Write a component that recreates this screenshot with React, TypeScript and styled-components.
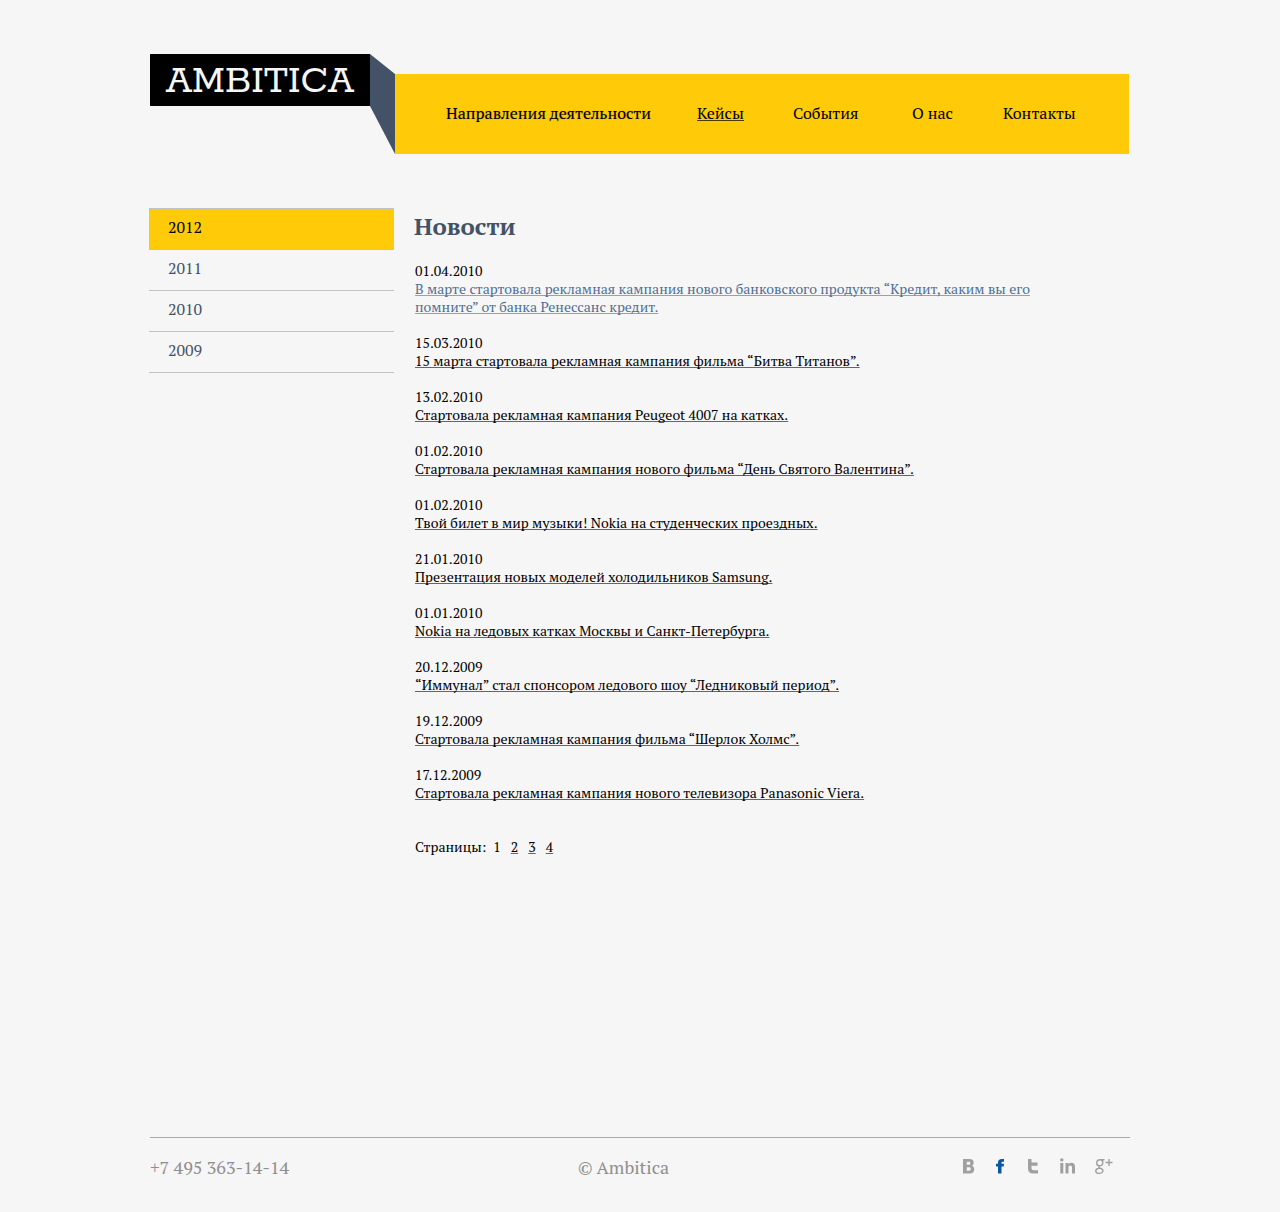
import React from "react";
import styled, { createGlobalStyle } from "styled-components";

const GlobalStyle = createGlobalStyle`
  *, *::before, *::after { box-sizing: border-box; }
  body {
    margin: 0;
    background: #f6f6f6;
    color: #000;
    font-family: "PT Serif", "Liberation Serif", serif;
    font-size: 14px;
    line-height: 18px;
  }
  #root { min-height: 100vh; display: flex; flex-direction: column; }
`;

const Page = styled.div`
  width: 100%;
  max-width: 980px;
  margin: 0 auto;
  flex: 1;
  display: flex;
  flex-direction: column;
  padding-top: 54px;
`;

const Header = styled.header`
  display: flex;
  align-items: flex-start;
  padding-right: 1px;
`;

const Logo = styled.a`
  flex: none;
  width: 220px;
  height: 52px;
  display: flex;
  align-items: center;
  justify-content: center;
  padding-top: 4px;
  background: #000;
  color: #f6f6f6;
  font-family: "Rokkitt", "DejaVu Serif", serif;
  font-size: 41px;
  line-height: 48px;
  text-decoration: none;
`;

const Fold = styled.svg`
  flex: none;
  display: block;
`;

const Nav = styled.nav`
  flex: 1;
  min-height: 80px;
  margin-top: 20px;
  padding: 0 0 2px 51px;
  display: grid;
  grid-template-columns: 251fr 96fr 119fr 91fr 126fr;
  align-items: center;
  background: #ffcb08;
`;

const NavLink = styled.a<{ $current?: boolean; $strong?: boolean }>`
  color: #000;
  font-size: 16px;
  line-height: 24px;
  white-space: nowrap;
  text-decoration: ${(p) => (p.$current ? "underline" : "none")};
  text-decoration-color: #4d3d02;
  text-shadow: ${(p) => (p.$strong ? "0 0 1px rgba(0, 0, 0, 0.3)" : "none")};
`;

const Columns = styled.div`
  display: grid;
  grid-template-columns: 245px minmax(0, 640px);
  column-gap: 20px;
  align-items: start;
  margin: 54px 0 0 -1px;
`;

const Years = styled.ul`
  list-style: none;
  margin: 0;
  padding: 0;
  border-top: 1px solid #bfc3c7;
`;

const YearLink = styled.a<{ $active?: boolean }>`
  display: block;
  padding: 6px 19px 10px;
  border-bottom: 1px solid #bfc3c7;
  background: ${(p) => (p.$active ? "#ffcb08" : "transparent")};
  color: ${(p) => (p.$active ? "#000" : "#435266")};
  font-size: 16px;
  line-height: 24px;
  text-decoration: none;
`;

const Title = styled.h1`
  margin: 0;
  color: #435266;
  font-size: 24px;
  line-height: 36px;
`;

const NewsList = styled.ul`
  list-style: none;
  margin: 18px 0 36px;
  padding: 0 0 0 1px;
  display: grid;
  gap: 18px;
`;

const NewsDate = styled.time`
  display: block;
`;

const NewsLink = styled.a<{ $accent?: boolean }>`
  color: ${(p) => (p.$accent ? "#4f6f98" : "#000")};
  text-decoration: underline;
  text-decoration-color: ${(p) => (p.$accent ? "#8ba2c0" : "#666")};
  text-decoration-skip-ink: none;
`;

const Pages = styled.nav`
  display: flex;
  gap: 10px;
  padding-left: 1px;
`;

const PagesLabel = styled.span`
  margin-right: -3px;
`;

const Footer = styled.footer`
  margin-top: auto;
  min-height: 75px;
  padding: 17px 17px 0 0;
  display: grid;
  grid-template-columns: 428px 1fr auto;
  align-items: start;
  border-top: 1px solid #a9a9a9;
  color: #8f8f8f;
  font-size: 18px;
  line-height: 24px;
`;

const Social = styled.div`
  display: flex;
  align-items: flex-start;
  gap: 21px;
  padding-top: 3px;
`;

const SocialLink = styled.a<{ $accent?: boolean }>`
  color: ${(p) => (p.$accent ? "#0a57a4" : "#a0a0a0")};

  svg {
    display: block;
    overflow: visible;
  }
`;

const news = [
  ["01.04.2010", "В марте стартовала рекламная кампания нового банковского продукта “Кредит, каким вы его помните” от банка Ренессанс кредит."],
  ["15.03.2010", "15 марта стартовала рекламная кампания фильма “Битва Титанов”."],
  ["13.02.2010", "Стартовала рекламная кампания Peugeot 4007 на катках."],
  ["01.02.2010", "Стартовала рекламная кампания нового фильма “День Святого Валентина”."],
  ["01.02.2010", "Твой билет в мир музыки! Nokia на студенческих проездных."],
  ["21.01.2010", "Презентация новых моделей холодильников Samsung."],
  ["01.01.2010", "Nokia на ледовых катках Москвы и Санкт-Петербурга."],
  ["20.12.2009", "“Иммунал” стал спонсором ледового шоу “Ледниковый период”."],
  ["19.12.2009", "Стартовала рекламная кампания фильма “Шерлок Холмс”."],
  ["17.12.2009", "Стартовала рекламная кампания нового телевизора Panasonic Viera."],
];

const VkIcon = () => (
  <svg width="12" height="17" viewBox="0 0 12 17" aria-hidden="true">
    <path
      fill="currentColor"
      fillRule="evenodd"
      d="M0 1H6.5C9.5 1 10.700 2.400 10.700 4.600C10.700 6.200 10 7.200 9 7.700C10.400 8.200 11.200 9.400 11.200 11.200C11.200 14 9.600 15.500 6.800 15.500H0ZM3.800 3.800V6.700H5.800C6.800 6.700 7.300 6.200 7.300 5.200C7.300 4.200 6.800 3.800 5.800 3.800ZM3.800 9.300V12.700H6C7.200 12.700 7.700 12.100 7.700 11C7.700 9.900 7.200 9.300 6 9.300Z"
    />
  </svg>
);

const FacebookIcon = () => (
  <svg width="11" height="17" viewBox="0 0 11 17" aria-hidden="true">
    <path
      fill="currentColor"
      d="M2 15.500V8.500H0V5.700H2V4.500C2 2.200 3.400 1 5.700 1H8V3.700H6.800C5.900 3.700 5.500 4 5.500 4.800V5.700H8L7.700 8.500H5.500V15.500Z"
    />
  </svg>
);

const TwitterIcon = () => (
  <svg width="11" height="17" viewBox="0 0 11 17" aria-hidden="true">
    <path
      fill="currentColor"
      d="M0 1H3.500V4.500H9.500V7.700H3.500V10C3.500 11.500 4.200 12.200 5.700 12.200H10V15.500H5C1.700 15.500 0 13.700 0 10.800Z"
    />
  </svg>
);

const LinkedInIcon = () => (
  <svg width="15" height="17" viewBox="0 0 15 17" aria-hidden="true">
    <g fill="currentColor">
      <circle cx="1.800" cy="1.900" r="1.700" />
      <path d="M0.300 5H3.300V15.500H0.300ZM5.500 5H8.400V6.300C9.100 5.300 10.100 4.800 11.400 4.800C13.900 4.800 15 6.300 15 8.800V15.500H12V9.500C12 8.200 11.500 7.500 10.400 7.500C9.200 7.500 8.500 8.300 8.500 9.600V15.500H5.500Z" />
    </g>
  </svg>
);

const GooglePlusIcon = () => (
  <svg width="17" height="17" viewBox="1 0 17 17" aria-hidden="true">
    <g fill="none" stroke="currentColor" strokeWidth="1.400">
      <path d="M9.500 1.700H5.200C3 1.700 1.700 3.100 1.700 5C1.700 6.700 2.900 7.800 4.500 7.800C6.500 7.800 7.800 6.400 7.800 4.500C7.800 3 7 1.900 5.600 1.700M4.300 7.900C3.500 8.600 3.600 9.400 4.600 9.900L6.600 10.900C9 12.300 7.900 15.400 4.300 15.400C0 15.400-0.300 11.400 3.200 10.500L4.900 10" />
      <path d="M10.500 4.500H17.500M14 1V8" />
    </g>
  </svg>
);

export default function App() {
  return (
    <>
      <GlobalStyle />
      <Page>
        <Header>
          <Logo href="#">AMBITICA</Logo>
          <Fold width="25" height="100" viewBox="0 0 25 100" aria-hidden="true">
            <path d="M0 0L25 20V100L0 52Z" fill="#435266" />
          </Fold>
          <Nav>
            <NavLink href="#" $strong>Направления деятельности</NavLink>
            <NavLink href="#" $current>Кейсы</NavLink>
            <NavLink href="#">События</NavLink>
            <NavLink href="#">О нас</NavLink>
            <NavLink href="#">Контакты</NavLink>
          </Nav>
        </Header>
        <Columns>
          <Years>
            {["2012", "2011", "2010", "2009"].map((y, i) => (
              <li key={y}><YearLink href="#" $active={i === 0}>{y}</YearLink></li>
            ))}
          </Years>
          <main>
            <Title>Новости</Title>
            <NewsList>
              {news.map(([date, text], i) => (
                <li key={text}>
                  <NewsDate>{date}</NewsDate>
                  <NewsLink href="#" $accent={i === 0}>{text}</NewsLink>
                </li>
              ))}
            </NewsList>
            <Pages>
              <PagesLabel>Страницы:</PagesLabel>
              <span>1</span>
              <NewsLink href="#">2</NewsLink>
              <NewsLink href="#">3</NewsLink>
              <NewsLink href="#">4</NewsLink>
            </Pages>
          </main>
        </Columns>
        <Footer>
          <span>+7 495 363-14-14</span>
          <span>© Ambitica</span>
          <Social>
            <SocialLink href="#" aria-label="ВКонтакте"><VkIcon /></SocialLink>
            <SocialLink href="#" aria-label="Facebook" $accent><FacebookIcon /></SocialLink>
            <SocialLink href="#" aria-label="Twitter"><TwitterIcon /></SocialLink>
            <SocialLink href="#" aria-label="LinkedIn"><LinkedInIcon /></SocialLink>
            <SocialLink href="#" aria-label="Google+"><GooglePlusIcon /></SocialLink>
          </Social>
        </Footer>
      </Page>
    </>
  );
}
